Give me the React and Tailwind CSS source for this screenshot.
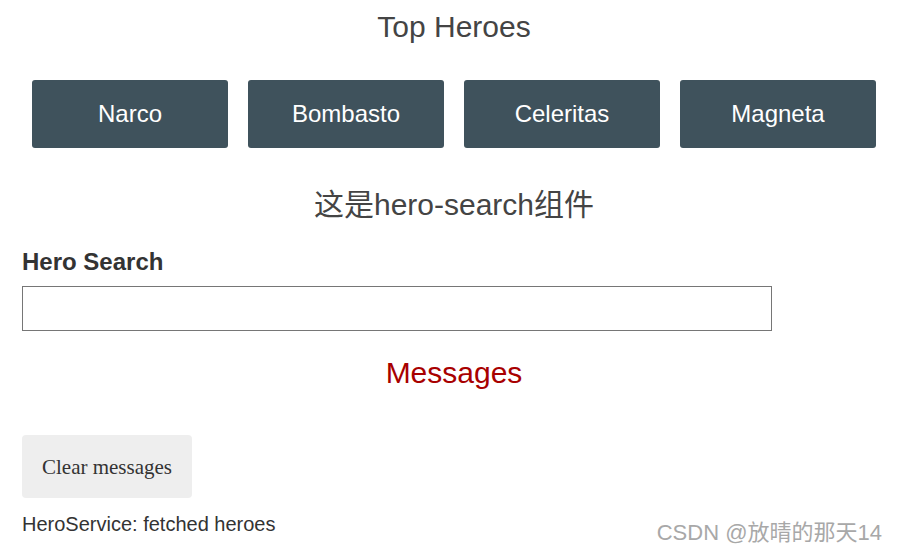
import React from "react";

const heroes = ["Narco", "Bombasto", "Celeritas", "Magneta"];

export default function App() {
  return (
    <div
      className="relative w-[898px] h-[555px] bg-white overflow-hidden"
      style={{ fontFamily: '"Liberation Sans", "Noto Sans CJK SC", sans-serif' }}
    >
      <div className="flex flex-col pl-[22px] pr-[12px]">
        <h3 className="mt-[9px] text-center text-[30px] leading-[36px] text-[#444] font-normal">
          Top Heroes
        </h3>
        <div className="mt-[35px] flex justify-center gap-5">
          {heroes.map((h) => (
            <a
              key={h}
              className="w-[196px] h-[68px] flex items-center justify-center rounded-[3px] bg-[#3f525c] text-white text-[24px]"
            >
              {h}
            </a>
          ))}
        </div>
        <h2 className="mt-[39px] text-center text-[30px] leading-[36px] text-[#444] font-normal">
          这是hero-search组件
        </h2>
        <label className="mt-[25px] text-[24px] leading-[28px] font-bold text-[#333]">
          Hero Search
        </label>
        <input
          className="mt-[10px] w-[750px] h-[45px] border border-[#767676] bg-white outline-none"
          type="text"
        />
        <h2 className="mt-[24px] text-center text-[30px] leading-[36px] text-[#a80000] font-normal">
          Messages
        </h2>
        <button
          className="mt-[44px] w-[170px] h-[63px] rounded-[4px] bg-[#eee] text-[#333] text-[21px] flex items-center justify-center pt-[2px]"
          style={{ fontFamily: '"Liberation Serif", serif' }}
        >
          Clear messages
        </button>
        <div className="mt-[14px] text-[20px] leading-[24px] text-[#333]">
          HeroService: fetched heroes
        </div>
      </div>
      <div
        className="absolute right-[16px] top-[521px] text-[22px] leading-[24px] text-[#a8a8a8] whitespace-nowrap"
        style={{ textShadow: "0 0 1px #fff" }}
      >
        CSDN @放晴的那天14
      </div>
    </div>
  );
}
